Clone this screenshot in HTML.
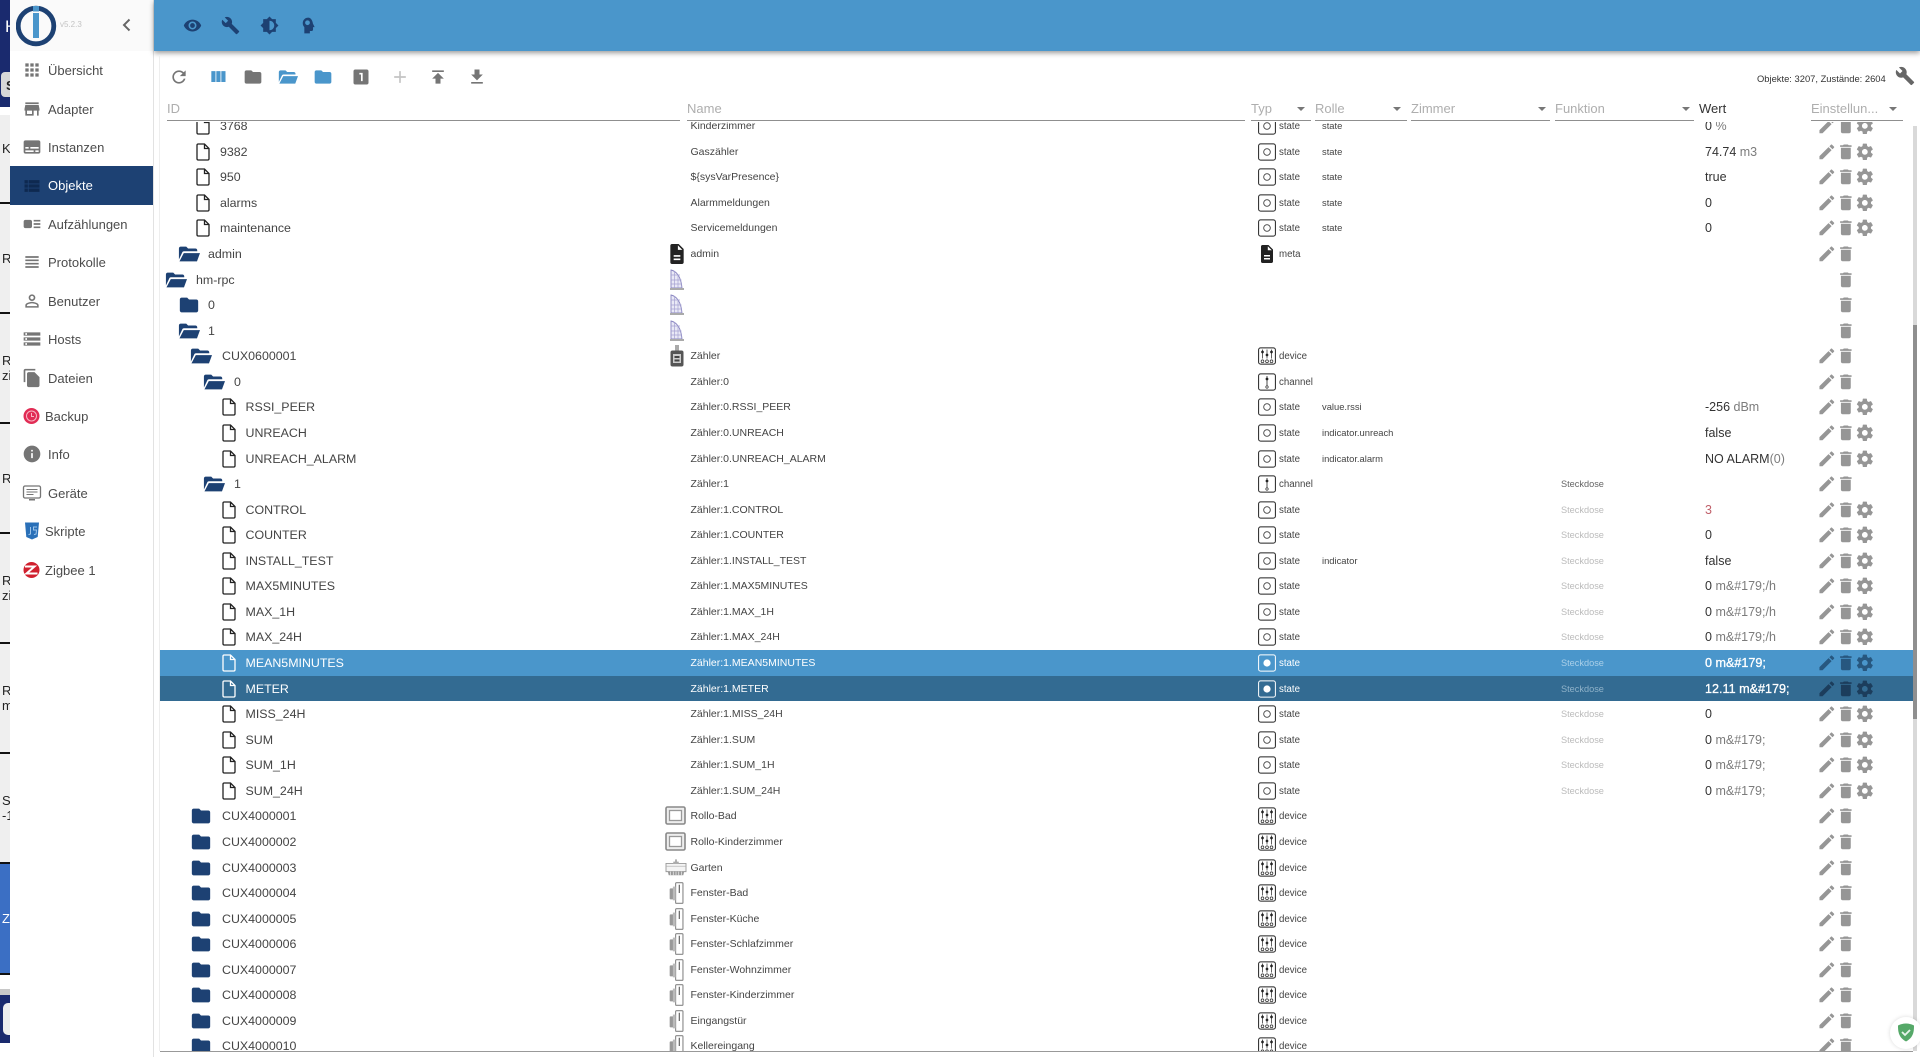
<!DOCTYPE html>
<html lang="de"><head><meta charset="utf-8"><title>ioBroker Objekte</title>
<style>
html,body{margin:0;padding:0;width:1920px;height:1057px;overflow:hidden;background:#fff;font-family:"Liberation Sans",sans-serif;color:#333}
#strip{position:absolute;left:0;top:0;width:10px;height:1057px;overflow:hidden;background:#efefef;font-size:13px;color:#222;line-height:15px}
#strip div,#strip span{position:absolute}
.ln{left:0;width:10px;height:2px;background:#111}
#side{position:absolute;left:10px;top:0;width:143px;height:1057px;background:#fff;border-right:1px solid #e2e2e2}
#side .hd{position:absolute;left:0;top:0;width:143px;height:51px;background:#fafafa}
.m{position:absolute;left:0;width:143px;height:38px;line-height:38px;font-size:13px;color:#4c4c4c}
.m span{position:absolute;left:38px;top:1px;white-space:nowrap}
.m svg{position:absolute;left:12px;top:9px;width:20px;height:20px;fill:#757575}
.m.x span{left:35px}
.m.on{background:#1d4173;color:#fff}.m.on svg{fill:#0e2950;top:10px}
#top{position:absolute;left:154px;top:0;width:1766px;height:51px;background:#4a96cb;box-shadow:0 2px 5px rgba(0,0,0,.4)}
#top svg{position:absolute;top:15.5px;width:19px;height:19px;fill:#1d4173}
#card{position:absolute;left:159px;top:56px;width:1px;height:995px;background:#eee}
.tb{position:absolute;top:67px;width:20px;height:20px;fill:#757575}
.hl{position:absolute;top:120px;height:1px;background:#8f8f8f}
.ht{position:absolute;top:101px;font-size:13px;line-height:16px;color:#aeaeae;white-space:nowrap}
.ar{position:absolute;top:107px;width:0;height:0;border-left:4px solid transparent;border-right:4px solid transparent;border-top:4px solid #777}
#list{position:absolute;left:160px;top:122px;width:1753px;height:929px;overflow:hidden}
#in{position:absolute;left:0;top:-8.8px;width:1753px}
.r{position:relative;height:25.57px;line-height:25.57px;width:1753px;color:#333}
.r>*{position:absolute;white-space:nowrap}
.r .k{top:1px;font-size:12.4px;color:#444}
.r .n{top:1px;left:530.5px;font-size:10.5px;color:#444}
.r .t{top:1px;left:1119px;font-size:9.7px;color:#444}
.r .o{left:1162px;font-size:9.4px;color:#444}
.r .u{top:1px;left:1401px;font-size:9.2px;color:#bbb}
.r .u.dk{color:#666}
.r .v{top:1px;left:1545px;font-size:12.5px;color:#333}
.r .v i{font-style:normal;color:#7c7c7c}
.r .v em{font-style:normal;color:#c0606a}
.r .a{left:1657px;top:3px;width:58px;height:20px;fill:#969696}
.r .ty{left:1098px;top:4px;width:18px;height:18px;stroke:#222;fill:none;color:#222}
.r .ic{left:507px;top:2px;width:20px;height:22px}
.r .ic.w{left:505px;top:3px;width:21px;height:19px}
.r .ic.g{left:504px;top:3px;width:24px;height:20px}
.fo{top:2px;width:22px;height:22px;fill:#1d4173;margin-left:-2px}
.fi{top:4px;width:14px;height:18px;fill:none;stroke:#222;stroke-width:1.3}
.L0 .d{left:7px}.L0 .k{left:36px}
.L1 .d{left:20px}.L1 .k{left:48px}
.L2 .d{left:32px}.L2 .k{left:62px}
.L3 .d{left:45px}.L3 .k{left:74px}
.L4 .d{left:36px}.L4 .k{left:60px}
.L5 .d{left:62px}.L5 .k{left:85.5px}
.s1{background:#4a96cb}.s2{background:#336b92}
.s1 .k,.s2 .k,.s1 .n,.s2 .n,.s1 .t,.s2 .t,.s1 .v,.s2 .v{color:#fff}
.s1 .v,.s2 .v{font-size:12.6px;-webkit-text-stroke:.3px #fff}
.s1 .u{color:#a9cfe8}.s2 .u{color:#8fb2c9}
.s1 .fi,.s2 .fi{stroke:#fff}
.s1 .ty,.s2 .ty{stroke:#fff;color:#fff}
.s1 .a{fill:#27577f}.s2 .a{fill:#1c3d5c}
</style></head><body>
<svg width="0" height="0" style="position:absolute">
<defs>
<symbol id="file" viewBox="0 0 14 18"><path d="M2.2 1h6.3l4.5 4.5V15.8a1.2 1.2 0 0 1-1.2 1.2H2.2A1.2 1.2 0 0 1 1 15.8V2.2A1.2 1.2 0 0 1 2.2 1zM8.5 1v4.5H13"/></symbol>
<symbol id="fc" viewBox="0 0 24 24"><path d="M10 4H4c-1.100 0-2 .9-2 2v12c0 1.100.9 2 2 2h16c1.100 0 2-.9 2-2V8c0-1.100-.9-2-2-2h-8l-2-2z"/></symbol>
<symbol id="fo" viewBox="0 0 24 24"><path d="M1 6c0-1.100.9-2 2-2h6l2 2h8c1.100 0 2 .9 2 2v1H6.500c-.9 0-1.700.6-1.900 1.400L1 18V6zM6.300 11H24l-3.300 9H1.600z"/></symbol>
<symbol id="st" viewBox="0 0 18 18"><rect x=".6" y=".9" width="16.800" height="16.200" rx="2" stroke-width="1"/><circle cx="9" cy="9" r="3.300" stroke-width=".9" stroke="#444"/></symbol>
<symbol id="sf" viewBox="0 0 18 18"><rect x=".6" y=".9" width="16.800" height="16.200" rx="2" stroke-width="1"/><circle cx="9" cy="9" r="3.600" fill="#fff" stroke="none"/></symbol>
<symbol id="ch" viewBox="0 0 18 18"><rect x=".6" y=".9" width="16.800" height="16.200" rx="2" stroke-width="1"/><path d="M9 3v10" stroke-width=".8"/><circle cx="9" cy="6" r="1.200" fill="currentColor" stroke-width=".5"/><circle cx="9" cy="14" r="1.200" stroke-width=".7"/></symbol>
<symbol id="dv" viewBox="0 0 18 18"><rect x=".6" y=".9" width="16.800" height="16.200" rx="2" stroke-width="1"/><path d="M4.500 2.500v9M9 2.500v9M13.500 2.500v9" stroke-width=".7"/><circle cx="4.500" cy="5" r="1.200" fill="currentColor" stroke-width=".4"/><circle cx="9" cy="8" r="1.200" fill="currentColor" stroke-width=".4"/><circle cx="13.500" cy="5" r="1.200" fill="currentColor" stroke-width=".4"/><circle cx="4.500" cy="14.300" r="1.400" stroke-width=".7"/><circle cx="9" cy="14.300" r="1.400" stroke-width=".7"/><circle cx="13.500" cy="14.300" r="1.400" stroke-width=".7"/></symbol>
<symbol id="mt" viewBox="0 0 18 18"><path fill="#222" stroke="none" d="M10.500 0H4.500C3.600 0 3 .7 3 1.500V16.500C3 17.300 3.600 18 4.500 18h9c.8 0 1.500-.7 1.500-1.500V4.500L10.500 0zM12 14.500H6V13h6v1.500zm0-3H6V10h6v1.500zM9.800 5.300V1.200l4 4.100h-4z"/></symbol>
<symbol id="a3" viewBox="0 0 58 20"><g transform="scale(.82)"><path d="M3 17.250V21h3.750L17.810 9.940l-3.750-3.750L3 17.250zM20.710 7.040c.39-.39.39-1.020 0-1.410l-2.340-2.340c-.39-.39-1.020-.39-1.410 0l-1.830 1.830 3.750 3.750 1.830-1.830z"/></g><g transform="translate(19 0) scale(.82)"><path d="M6 19c0 1.100.9 2 2 2h8c1.100 0 2-.9 2-2V7H6v12zM19 4h-3.500l-1-1h-5l-1 1H5v2h14V4z"/></g><g transform="translate(38 0) scale(.82)"><path d="M19.430 12.980c.04-.32.07-.64.07-.98s-.03-.66-.07-.98l2.110-1.650c.19-.15.24-.42.12-.64l-2-3.460c-.12-.22-.39-.3-.61-.22l-2.490 1c-.52-.4-1.080-.73-1.690-.98l-.38-2.650C14.460 2.180 14.250 2 14 2h-4c-.25 0-.46.18-.49.42l-.38 2.650c-.61.25-1.170.59-1.690.98l-2.490-1c-.23-.09-.49 0-.61.22l-2 3.460c-.13.22-.07.49.12.64l2.110 1.650c-.04.32-.07.65-.07.98s.03.66.07.98l-2.110 1.650c-.19.15-.24.42-.12.64l2 3.460c.12.22.39.3.61.22l2.490-1c.52.4 1.080.73 1.690.98l.38 2.650c.03.24.24.42.49.42h4c.25 0 .46-.18.49-.42l.38-2.650c.61-.25 1.170-.59 1.690-.98l2.490 1c.23.09.49 0 .61-.22l2-3.460c.12-.22.07-.49-.12-.64l-2.110-1.650zM12 15.500c-1.930 0-3.500-1.570-3.500-3.500s1.570-3.500 3.500-3.500 3.500 1.570 3.500 3.500-1.570 3.500-3.500 3.500z"/></g></symbol>
<symbol id="a2" viewBox="0 0 58 20"><g transform="scale(.82)"><path d="M3 17.250V21h3.750L17.810 9.940l-3.750-3.750L3 17.250zM20.710 7.040c.39-.39.39-1.020 0-1.410l-2.340-2.340c-.39-.39-1.020-.39-1.410 0l-1.830 1.830 3.750 3.750 1.830-1.830z"/></g><g transform="translate(19 0) scale(.82)"><path d="M6 19c0 1.100.9 2 2 2h8c1.100 0 2-.9 2-2V7H6v12zM19 4h-3.500l-1-1h-5l-1 1H5v2h14V4z"/></g></symbol>
<symbol id="a1" viewBox="0 0 58 20"><g transform="translate(19 0) scale(.82)"><path d="M6 19c0 1.100.9 2 2 2h8c1.100 0 2-.9 2-2V7H6v12zM19 4h-3.500l-1-1h-5l-1 1H5v2h14V4z"/></g></symbol>
<symbol id="bl" viewBox="0 0 20 22"><path d="M4 1c5 1 10 6 11 18H4z" fill="#e9e9f6" stroke="#8a86c0" stroke-width=".9"/><path d="M4 6h9M4 11h10.500M4 15h11M7.500 2v17M11 6v13" stroke="#a5a2d2" stroke-width=".7" fill="none"/><path d="M3 20h14" stroke="#aaa" stroke-width="2"/></symbol>
<symbol id="zl" viewBox="0 0 20 22"><rect x="8" y="0" width="4" height="6" fill="#aaa"/><rect x="3.500" y="5.500" width="13" height="16" rx="2" fill="#555"/><rect x="6" y="9" width="8" height="9" fill="#ccc"/><rect x="7.500" y="11" width="5" height="2" fill="#444"/><rect x="7.500" y="14.500" width="5" height="2" fill="#444"/></symbol>
<symbol id="ro" viewBox="0 0 21 19" preserveAspectRatio="none"><rect x="1" y="1" width="19" height="17" rx="1.500" fill="#eee" stroke="#888" stroke-width="1.600"/><rect x="4.500" y="4.500" width="12" height="10" fill="#fff" stroke="#999" stroke-width="1.300"/></symbol>
<symbol id="ga" viewBox="0 0 24 22"><path d="M1 6h22v9H1z" fill="#f4f4f4" stroke="#999" stroke-width="1"/><path d="M9 4h6v2H9zM11 1.500h2V4h-2z" fill="#aaa"/><path d="M1 9h22" stroke="#aaa" stroke-width=".8"/><path d="M3 15h18l-1 4H4z" fill="#999"/><path d="M6 15v4M9 15v4M12 15v4M15 15v4M18 15v4" stroke="#eee" stroke-width=".8"/></symbol>
<symbol id="fe" viewBox="0 0 20 24"><rect x="2" y="7" width="6" height="12" rx="1" fill="#999"/><rect x="8.500" y=".7" width="8" height="22.600" rx="1" fill="#fff" stroke="#888" stroke-width="1.200"/><path d="M12.500 3v9" stroke="#555" stroke-width="1.200"/><rect x="5.500" y="5" width="3" height="15" fill="#bbb"/></symbol>
</defs></svg>

<div id="strip">
<div style="left:0;top:0;width:10px;height:107px;background:#1a2a6e"></div>
<span style="left:5px;top:17px;color:#fff;font-size:17px;line-height:20px">H</span>
<div style="left:1px;top:72px;width:12px;height:25px;background:#d8d8d8;border-radius:4px 0 0 4px"></div>
<span style="left:6px;top:78px;font-weight:bold">S</span>
<div style="left:0;top:107px;width:10px;height:8px;background:#fff"></div>
<span style="left:2px;top:141px">K</span>
<div class="ln" style="top:202px"></div>
<span style="left:2px;top:251px">R</span>
<div class="ln" style="top:312px"></div>
<span style="left:2px;top:353px">R</span><span style="left:2px;top:368px">zi</span>
<div class="ln" style="top:422px"></div>
<span style="left:2px;top:471px">R</span>
<div class="ln" style="top:532px"></div>
<span style="left:2px;top:573px">R</span><span style="left:2px;top:588px">zi</span>
<div class="ln" style="top:642px"></div>
<span style="left:2px;top:683px">R</span><span style="left:2px;top:698px">m</span>
<div class="ln" style="top:752px"></div>
<span style="left:2px;top:793px">S</span><span style="left:2px;top:808px">-1</span>
<div class="ln" style="top:862px"></div>
<div style="left:0;top:864px;width:10px;height:109px;background:#3b6fc4"></div>
<span style="left:2px;top:911px;color:#fff">Z</span>
<div class="ln" style="top:973px"></div>
<div style="left:0;top:975px;width:10px;height:14px;background:#fff"></div>
<div style="left:0;top:989px;width:10px;height:6px;background:#c8c8c8"></div>
<div style="left:0;top:995px;width:10px;height:48px;background:#1a2a6e"></div>
<div style="left:3px;top:1003px;width:12px;height:32px;background:#eee;border-radius:5px"></div>
<div style="left:0;top:1043px;width:10px;height:14px;background:#fff"></div>
</div>

<div id="side">
<div class="hd"></div>
<svg style="position:absolute;left:6px;top:5px;width:42px;height:42px" viewBox="0 0 42 42"><circle cx="20" cy="21" r="17.800" fill="none" stroke="#1d4173" stroke-width="4.800"/><rect x="17" y="1" width="6" height="5.500" fill="#4a96cb"/><rect x="17" y="8" width="6" height="25" fill="#4a96cb"/></svg>
<span style="position:absolute;left:50px;top:20px;font-size:8px;color:#c4c4c4;line-height:10px">v5.2.3</span>
<svg style="position:absolute;left:109px;top:17px;width:16px;height:16px" viewBox="0 0 16 16"><path d="M10.500 2.500 5 8l5.500 5.500" fill="none" stroke="#666" stroke-width="2"/></svg>
<div class="m" style="top:51px"><svg viewBox="0 0 24 24"><path d="M4 8h4V4H4v4zm6 12h4v-4h-4v4zm-6 0h4v-4H4v4zm0-6h4v-4H4v4zm6 0h4v-4h-4v4zm6-10v4h4V4h-4zm-6 4h4V4h-4v4zm6 6h4v-4h-4v4zm0 6h4v-4h-4v4z"/></svg><span>Übersicht</span></div>
<div class="m" style="top:90px"><svg viewBox="0 0 24 24"><path d="M20 4H4v2h16V4zm1 10v-2l-1-5H4l-1 5v2h1v6h10v-6h4v6h2v-6h1zm-9 4H6v-4h6v4z"/></svg><span>Adapter</span></div>
<div class="m" style="top:128px"><svg viewBox="0 0 24 24"><path d="M20 4H4c-1.100 0-2 .9-2 2v12c0 1.100.9 2 2 2h16c1.100 0 2-.9 2-2V6c0-1.100-.9-2-2-2zM4 12h4v2H4v-2zm10 6H4v-2h10v2zm6 0h-4v-2h4v2zm0-4H10v-2h10v2z"/></svg><span>Instanzen</span></div>
<div class="m on" style="top:166px;height:39px"><svg viewBox="0 0 24 24"><path d="M3 14h4v-4H3v4zm0 5h4v-4H3v4zM3 9h4V5H3v4zm5 5h13v-4H8v4zm0 5h13v-4H8v4zM8 5v4h13V5H8z"/></svg><span>Objekte</span></div>
<div class="m" style="top:205px"><svg viewBox="0 0 24 24"><path d="M22 13h-8v-2h8v2zm0-6h-8v2h8V7zm-8 10h8v-2h-8v2zm-2-8v6c0 1.100-.9 2-2 2H4c-1.100 0-2-.9-2-2V9c0-1.100.9-2 2-2h6c1.100 0 2 .9 2 2z"/></svg><span>Aufzählungen</span></div>
<div class="m" style="top:243px"><svg viewBox="0 0 24 24"><path d="M4 15h16v-2H4v2zm0 4h16v-2H4v2zm0-8h16V9H4v2zm0-6v2h16V5H4z"/></svg><span>Protokolle</span></div>
<div class="m" style="top:282px"><svg viewBox="0 0 24 24"><path d="M12 5.900c1.160 0 2.100.94 2.100 2.100s-.94 2.100-2.100 2.100S9.900 9.160 9.900 8s.94-2.100 2.100-2.100m0 9c2.970 0 6.100 1.460 6.100 2.100v1.100H5.900V17c0-.64 3.130-2.100 6.100-2.100M12 4C9.790 4 8 5.790 8 8s1.790 4 4 4 4-1.790 4-4-1.790-4-4-4zm0 9c-2.670 0-8 1.340-8 4v3h16v-3c0-2.660-5.330-4-8-4z"/></svg><span>Benutzer</span></div>
<div class="m" style="top:320px"><svg viewBox="0 0 24 24"><path d="M2 20h20v-4H2v4zm2-3h2v2H4v-2zM2 4v4h20V4H2zm4 3H4V5h2v2zm-4 7h20v-4H2v4zm2-3h2v2H4v-2z"/></svg><span>Hosts</span></div>
<div class="m" style="top:359px"><svg viewBox="0 0 24 24"><path d="M16 1H4c-1.100 0-2 .9-2 2v14h2V3h12V1zm-1 4l6 6v10c0 1.100-.9 2-2 2H7.990C6.890 23 6 22.100 6 21l.01-14c0-1.100.89-2 1.990-2h7z"/></svg><span>Dateien</span></div>
<div class="m x" style="top:397px"><svg viewBox="0 0 20 20" style="left:12px"><circle cx="9.500" cy="10" r="8" fill="#e12c55"/><circle cx="9.500" cy="10" r="5" fill="none" stroke="#f7b7c5" stroke-width="1"/><path d="M9.500 7v3.500H12" fill="none" stroke="#f7b7c5" stroke-width="1"/></svg><span>Backup</span></div>
<div class="m" style="top:435px"><svg viewBox="0 0 24 24"><path d="M12 2C6.480 2 2 6.480 2 12s4.480 10 10 10 10-4.480 10-10S17.520 2 12 2zm1 15h-2v-6h2v6zm0-8h-2V7h2v2z"/></svg><span>Info</span></div>
<div class="m" style="top:474px"><svg viewBox="0 0 20 20"><rect x="1.500" y="3" width="17" height="12" rx="1.500" fill="none" stroke="#757575" stroke-width="1.300"/><path d="M4.500 6.500h11M4.500 9h11M4.500 11.500h7" stroke="#757575" stroke-width="1"/><path d="M7 16h6v1.500H7z"/></svg><span>Geräte</span></div>
<div class="m x" style="top:512px"><svg viewBox="0 0 20 20"><path d="M3 1.500h14L15.700 16 10 18.500 4.300 16z" fill="#2a70b8"/><path d="M8.500 6v7l-2 .6M15 6h-3.500v3h3l-.4 4-2.100.6" fill="none" stroke="#9cc4ea" stroke-width="1"/></svg><span>Skripte</span></div>
<div class="m x" style="top:551px"><svg viewBox="0 0 20 20"><circle cx="9.500" cy="10" r="8" fill="#d0202e"/><path d="M3 6.500h9.500L4.500 13.500h11" fill="none" stroke="#fff" stroke-width="2"/></svg><span>Zigbee 1</span></div>
</div>

<div id="top">
<svg style="left:28.500px" viewBox="0 0 24 24"><path d="M12 4.500C7 4.500 2.730 7.610 1 12c1.730 4.390 6 7.500 11 7.500s9.270-3.110 11-7.500c-1.730-4.390-6-7.500-11-7.500zM12 17c-2.760 0-5-2.240-5-5s2.240-5 5-5 5 2.240 5 5-2.240 5-5 5zm0-8c-1.660 0-3 1.340-3 3s1.340 3 3 3 3-1.340 3-3-1.340-3-3-3z"/></svg>
<svg style="left:66.500px" viewBox="0 0 24 24"><path d="M22.700 19l-9.100-9.100c.9-2.300.4-5-1.500-6.900-2-2-5-2.400-7.400-1.300L9 6 6 9 1.600 4.700C.4 7.100.9 10.100 2.900 12.100c1.900 1.900 4.600 2.400 6.900 1.500l9.100 9.100c.4.4 1 .4 1.400 0l2.300-2.300c.5-.4.5-1.100.1-1.400z"/></svg>
<svg style="left:105.500px" viewBox="0 0 24 24"><path d="M20 8.690V4h-4.690L12 .69 8.690 4H4v4.690L.69 12 4 15.310V20h4.690L12 23.310 15.310 20H20v-4.690L23.310 12 20 8.690zM12 18V6c3.310 0 6 2.690 6 6s-2.690 6-6 6z"/></svg>
<svg style="left:143.500px" viewBox="0 0 24 24"><path fill-rule="evenodd" d="M13 2C9 2 6 5 6 9c0 2.200.7 3.600 2 5v8h7v-3h2c1.100 0 2-.9 2-2v-3h2l-2.200-4.600C18.300 5.300 16 2 13 2zm-1 3.500a3 3 0 0 1 3 3 3 3 0 0 1-3 3 3 3 0 0 1-3-3 3 3 0 0 1 3-3z"/></svg>
</div>
<div id="card"></div>

<svg class="tb" style="left:169px" viewBox="0 0 24 24"><path d="M17.650 6.350C16.200 4.900 14.210 4 12 4c-4.420 0-7.990 3.580-7.990 8s3.570 8 7.990 8c3.730 0 6.840-2.550 7.730-6h-2.080c-.82 2.330-3.040 4-5.650 4-3.310 0-6-2.690-6-6s2.690-6 6-6c1.660 0 3.140.69 4.220 1.780L13 11h7V4l-2.350 2.350z"/></svg>
<svg class="tb" style="left:208px;fill:#4a96cb" viewBox="0 0 24 24"><path d="M10 18h5V5h-5v13zm-6 0h5V5H4v13zM16 5v13h5V5h-5z"/></svg>
<svg class="tb" style="left:243px" viewBox="0 0 24 24"><path d="M10 4H4c-1.100 0-2 .9-2 2v12c0 1.100.9 2 2 2h16c1.100 0 2-.9 2-2V8c0-1.100-.9-2-2-2h-8l-2-2z"/></svg>
<svg class="tb" style="left:278px;fill:#4a96cb" viewBox="0 0 24 24"><path d="M1 6c0-1.100.9-2 2-2h6l2 2h8c1.100 0 2 .9 2 2v1H6.500c-.9 0-1.700.6-1.900 1.400L1 18V6zM6.300 11H24l-3.300 9H1.600z"/></svg>
<svg class="tb" style="left:313px;fill:#4a96cb" viewBox="0 0 24 24"><path d="M10 4H4c-1.100 0-2 .9-2 2v12c0 1.100.9 2 2 2h16c1.100 0 2-.9 2-2V8c0-1.100-.9-2-2-2h-8l-2-2z"/></svg>
<svg class="tb" style="left:351px" viewBox="0 0 24 24"><path d="M19 3H5c-1.100 0-2 .9-2 2v14c0 1.100.9 2 2 2h14c1.100 0 2-.9 2-2V5c0-1.100-.9-2-2-2zm-5 14h-2V9h-2V7h4v10z"/></svg>
<svg class="tb" style="left:390px;fill:#c4c4c4" viewBox="0 0 24 24"><path d="M19 13h-6v6h-2v-6H5v-2h6V5h2v6h6v2z"/></svg>
<svg class="tb" style="left:428px" viewBox="0 0 24 24"><path d="M5 4v2h14V4H5zm0 10h4v6h6v-6h4l-7-7-7 7z"/></svg>
<svg class="tb" style="left:467px" viewBox="0 0 24 24"><path d="M19 9h-4V3H9v6H5l7 7 7-7zM5 18v2h14v-2H5z"/></svg>

<span style="position:absolute;left:1757px;top:73px;font-size:9.400px;line-height:12px;color:#333;white-space:nowrap">Objekte: 3207, Zustände: 2604</span>
<svg style="position:absolute;left:1895px;top:66px;width:20px;height:20px;fill:#666" viewBox="0 0 24 24"><path d="M22.700 19l-9.100-9.100c.9-2.300.4-5-1.500-6.900-2-2-5-2.400-7.400-1.300L9 6 6 9 1.600 4.700C.4 7.100.9 10.100 2.900 12.100c1.900 1.900 4.600 2.400 6.900 1.500l9.100 9.100c.4.4 1 .4 1.400 0l2.300-2.300c.5-.4.5-1.100.1-1.400z"/></svg>

<span class="ht" style="left:167px">ID</span><div class="hl" style="left:167px;width:513px"></div>
<span class="ht" style="left:687px">Name</span><div class="hl" style="left:687px;width:558px"></div>
<span class="ht" style="left:1251px">Typ</span><div class="ar" style="left:1297px"></div><div class="hl" style="left:1251px;width:60px"></div>
<span class="ht" style="left:1315px">Rolle</span><div class="ar" style="left:1393px"></div><div class="hl" style="left:1315px;width:92px"></div>
<span class="ht" style="left:1411px">Zimmer</span><div class="ar" style="left:1538px"></div><div class="hl" style="left:1411px;width:139px"></div>
<span class="ht" style="left:1555px">Funktion</span><div class="ar" style="left:1682px"></div><div class="hl" style="left:1555px;width:139px"></div>
<span class="ht" style="left:1699px;color:#333">Wert</span>
<span class="ht" style="left:1811px">Einstellun...</span><div class="ar" style="left:1889px"></div><div class="hl" style="left:1811px;width:92px"></div>

<div id="list"><div id="in">
<div class="r L4"><svg class="d fi"><use href="#file"/></svg><span class="k">3768</span><span class="n">Kinderzimmer</span><svg class="ty"><use href="#st"/></svg><span class="t">state</span><span class="o">state</span><span class="v">0 <i>%</i></span><svg class="a"><use href="#a3"/></svg></div>
<div class="r L4"><svg class="d fi"><use href="#file"/></svg><span class="k">9382</span><span class="n">Gaszähler</span><svg class="ty"><use href="#st"/></svg><span class="t">state</span><span class="o">state</span><span class="v">74.74 <i>m3</i></span><svg class="a"><use href="#a3"/></svg></div>
<div class="r L4"><svg class="d fi"><use href="#file"/></svg><span class="k">950</span><span class="n">${sysVarPresence}</span><svg class="ty"><use href="#st"/></svg><span class="t">state</span><span class="o">state</span><span class="v">true</span><svg class="a"><use href="#a3"/></svg></div>
<div class="r L4"><svg class="d fi"><use href="#file"/></svg><span class="k">alarms</span><span class="n">Alarmmeldungen</span><svg class="ty"><use href="#st"/></svg><span class="t">state</span><span class="o">state</span><span class="v">0</span><svg class="a"><use href="#a3"/></svg></div>
<div class="r L4"><svg class="d fi"><use href="#file"/></svg><span class="k">maintenance</span><span class="n">Servicemeldungen</span><svg class="ty"><use href="#st"/></svg><span class="t">state</span><span class="o">state</span><span class="v">0</span><svg class="a"><use href="#a3"/></svg></div>
<div class="r L1"><svg class="d fo"><use href="#fo"/></svg><span class="k">admin</span><svg class="ic"><use href="#mt"/></svg><span class="n">admin</span><svg class="ty"><use href="#mt"/></svg><span class="t">meta</span><svg class="a"><use href="#a2"/></svg></div>
<div class="r L0"><svg class="d fo"><use href="#fo"/></svg><span class="k">hm-rpc</span><svg class="ic"><use href="#bl"/></svg><svg class="a"><use href="#a1"/></svg></div>
<div class="r L1"><svg class="d fo"><use href="#fc"/></svg><span class="k">0</span><svg class="ic"><use href="#bl"/></svg><svg class="a"><use href="#a1"/></svg></div>
<div class="r L1"><svg class="d fo"><use href="#fo"/></svg><span class="k">1</span><svg class="ic"><use href="#bl"/></svg><svg class="a"><use href="#a1"/></svg></div>
<div class="r L2"><svg class="d fo"><use href="#fo"/></svg><span class="k">CUX0600001</span><svg class="ic"><use href="#zl"/></svg><span class="n">Zähler</span><svg class="ty"><use href="#dv"/></svg><span class="t">device</span><svg class="a"><use href="#a2"/></svg></div>
<div class="r L3"><svg class="d fo"><use href="#fo"/></svg><span class="k">0</span><span class="n">Zähler:0</span><svg class="ty"><use href="#ch"/></svg><span class="t">channel</span><svg class="a"><use href="#a2"/></svg></div>
<div class="r L5"><svg class="d fi"><use href="#file"/></svg><span class="k">RSSI_PEER</span><span class="n">Zähler:0.RSSI_PEER</span><svg class="ty"><use href="#st"/></svg><span class="t">state</span><span class="o">value.rssi</span><span class="v">-256 <i>dBm</i></span><svg class="a"><use href="#a3"/></svg></div>
<div class="r L5"><svg class="d fi"><use href="#file"/></svg><span class="k">UNREACH</span><span class="n">Zähler:0.UNREACH</span><svg class="ty"><use href="#st"/></svg><span class="t">state</span><span class="o">indicator.unreach</span><span class="v">false</span><svg class="a"><use href="#a3"/></svg></div>
<div class="r L5"><svg class="d fi"><use href="#file"/></svg><span class="k">UNREACH_ALARM</span><span class="n">Zähler:0.UNREACH_ALARM</span><svg class="ty"><use href="#st"/></svg><span class="t">state</span><span class="o">indicator.alarm</span><span class="v">NO ALARM<i>(0)</i></span><svg class="a"><use href="#a3"/></svg></div>
<div class="r L3"><svg class="d fo"><use href="#fo"/></svg><span class="k">1</span><span class="n">Zähler:1</span><svg class="ty"><use href="#ch"/></svg><span class="t">channel</span><span class="u dk">Steckdose</span><svg class="a"><use href="#a2"/></svg></div>
<div class="r L5"><svg class="d fi"><use href="#file"/></svg><span class="k">CONTROL</span><span class="n">Zähler:1.CONTROL</span><svg class="ty"><use href="#st"/></svg><span class="t">state</span><span class="u">Steckdose</span><span class="v"><em>3</em></span><svg class="a"><use href="#a3"/></svg></div>
<div class="r L5"><svg class="d fi"><use href="#file"/></svg><span class="k">COUNTER</span><span class="n">Zähler:1.COUNTER</span><svg class="ty"><use href="#st"/></svg><span class="t">state</span><span class="u">Steckdose</span><span class="v">0</span><svg class="a"><use href="#a3"/></svg></div>
<div class="r L5"><svg class="d fi"><use href="#file"/></svg><span class="k">INSTALL_TEST</span><span class="n">Zähler:1.INSTALL_TEST</span><svg class="ty"><use href="#st"/></svg><span class="t">state</span><span class="o">indicator</span><span class="u">Steckdose</span><span class="v">false</span><svg class="a"><use href="#a3"/></svg></div>
<div class="r L5"><svg class="d fi"><use href="#file"/></svg><span class="k">MAX5MINUTES</span><span class="n">Zähler:1.MAX5MINUTES</span><svg class="ty"><use href="#st"/></svg><span class="t">state</span><span class="u">Steckdose</span><span class="v">0 <i>m&amp;#179;/h</i></span><svg class="a"><use href="#a3"/></svg></div>
<div class="r L5"><svg class="d fi"><use href="#file"/></svg><span class="k">MAX_1H</span><span class="n">Zähler:1.MAX_1H</span><svg class="ty"><use href="#st"/></svg><span class="t">state</span><span class="u">Steckdose</span><span class="v">0 <i>m&amp;#179;/h</i></span><svg class="a"><use href="#a3"/></svg></div>
<div class="r L5"><svg class="d fi"><use href="#file"/></svg><span class="k">MAX_24H</span><span class="n">Zähler:1.MAX_24H</span><svg class="ty"><use href="#st"/></svg><span class="t">state</span><span class="u">Steckdose</span><span class="v">0 <i>m&amp;#179;/h</i></span><svg class="a"><use href="#a3"/></svg></div>
<div class="r L5 s1"><svg class="d fi"><use href="#file"/></svg><span class="k">MEAN5MINUTES</span><span class="n">Zähler:1.MEAN5MINUTES</span><svg class="ty"><use href="#sf"/></svg><span class="t">state</span><span class="u">Steckdose</span><span class="v">0 m&amp;#179;</span><svg class="a"><use href="#a3"/></svg></div>
<div class="r L5 s2"><svg class="d fi"><use href="#file"/></svg><span class="k">METER</span><span class="n">Zähler:1.METER</span><svg class="ty"><use href="#sf"/></svg><span class="t">state</span><span class="u">Steckdose</span><span class="v">12.11 m&amp;#179;</span><svg class="a"><use href="#a3"/></svg></div>
<div class="r L5"><svg class="d fi"><use href="#file"/></svg><span class="k">MISS_24H</span><span class="n">Zähler:1.MISS_24H</span><svg class="ty"><use href="#st"/></svg><span class="t">state</span><span class="u">Steckdose</span><span class="v">0</span><svg class="a"><use href="#a3"/></svg></div>
<div class="r L5"><svg class="d fi"><use href="#file"/></svg><span class="k">SUM</span><span class="n">Zähler:1.SUM</span><svg class="ty"><use href="#st"/></svg><span class="t">state</span><span class="u">Steckdose</span><span class="v">0 <i>m&amp;#179;</i></span><svg class="a"><use href="#a3"/></svg></div>
<div class="r L5"><svg class="d fi"><use href="#file"/></svg><span class="k">SUM_1H</span><span class="n">Zähler:1.SUM_1H</span><svg class="ty"><use href="#st"/></svg><span class="t">state</span><span class="u">Steckdose</span><span class="v">0 <i>m&amp;#179;</i></span><svg class="a"><use href="#a3"/></svg></div>
<div class="r L5"><svg class="d fi"><use href="#file"/></svg><span class="k">SUM_24H</span><span class="n">Zähler:1.SUM_24H</span><svg class="ty"><use href="#st"/></svg><span class="t">state</span><span class="u">Steckdose</span><span class="v">0 <i>m&amp;#179;</i></span><svg class="a"><use href="#a3"/></svg></div>
<div class="r L2"><svg class="d fo"><use href="#fc"/></svg><span class="k">CUX4000001</span><svg class="ic w"><use href="#ro"/></svg><span class="n">Rollo-Bad</span><svg class="ty"><use href="#dv"/></svg><span class="t">device</span><svg class="a"><use href="#a2"/></svg></div>
<div class="r L2"><svg class="d fo"><use href="#fc"/></svg><span class="k">CUX4000002</span><svg class="ic w"><use href="#ro"/></svg><span class="n">Rollo-Kinderzimmer</span><svg class="ty"><use href="#dv"/></svg><span class="t">device</span><svg class="a"><use href="#a2"/></svg></div>
<div class="r L2"><svg class="d fo"><use href="#fc"/></svg><span class="k">CUX4000003</span><svg class="ic g"><use href="#ga"/></svg><span class="n">Garten</span><svg class="ty"><use href="#dv"/></svg><span class="t">device</span><svg class="a"><use href="#a2"/></svg></div>
<div class="r L2"><svg class="d fo"><use href="#fc"/></svg><span class="k">CUX4000004</span><svg class="ic"><use href="#fe"/></svg><span class="n">Fenster-Bad</span><svg class="ty"><use href="#dv"/></svg><span class="t">device</span><svg class="a"><use href="#a2"/></svg></div>
<div class="r L2"><svg class="d fo"><use href="#fc"/></svg><span class="k">CUX4000005</span><svg class="ic"><use href="#fe"/></svg><span class="n">Fenster-Küche</span><svg class="ty"><use href="#dv"/></svg><span class="t">device</span><svg class="a"><use href="#a2"/></svg></div>
<div class="r L2"><svg class="d fo"><use href="#fc"/></svg><span class="k">CUX4000006</span><svg class="ic"><use href="#fe"/></svg><span class="n">Fenster-Schlafzimmer</span><svg class="ty"><use href="#dv"/></svg><span class="t">device</span><svg class="a"><use href="#a2"/></svg></div>
<div class="r L2"><svg class="d fo"><use href="#fc"/></svg><span class="k">CUX4000007</span><svg class="ic"><use href="#fe"/></svg><span class="n">Fenster-Wohnzimmer</span><svg class="ty"><use href="#dv"/></svg><span class="t">device</span><svg class="a"><use href="#a2"/></svg></div>
<div class="r L2"><svg class="d fo"><use href="#fc"/></svg><span class="k">CUX4000008</span><svg class="ic"><use href="#fe"/></svg><span class="n">Fenster-Kinderzimmer</span><svg class="ty"><use href="#dv"/></svg><span class="t">device</span><svg class="a"><use href="#a2"/></svg></div>
<div class="r L2"><svg class="d fo"><use href="#fc"/></svg><span class="k">CUX4000009</span><svg class="ic"><use href="#fe"/></svg><span class="n">Eingangstür</span><svg class="ty"><use href="#dv"/></svg><span class="t">device</span><svg class="a"><use href="#a2"/></svg></div>
<div class="r L2"><svg class="d fo"><use href="#fc"/></svg><span class="k">CUX4000010</span><svg class="ic"><use href="#fe"/></svg><span class="n">Kellereingang</span><svg class="ty"><use href="#dv"/></svg><span class="t">device</span><svg class="a"><use href="#a2"/></svg></div>
</div></div>

<div style="position:absolute;left:1913px;top:126px;width:4px;height:925px;background:#d9d9d9"></div>
<div style="position:absolute;left:1913px;top:325px;width:4px;height:394px;background:#8f8f8f"></div>
<div style="position:absolute;left:160px;top:1051px;width:1753px;height:1px;background:#999"></div>
<div style="position:absolute;left:1890px;top:1017px;width:32px;height:32px;border-radius:50%;background:#fff;box-shadow:0 0 4px rgba(0,0,0,.15)"></div>
<svg style="position:absolute;left:1897px;top:1023px;width:18px;height:19px" viewBox="0 0 18 19"><path d="M9 .5c3 0 6 1 8 2 0 6-.5 12-8 16-7.500-4-8-10-8-16 2-1 5-2 8-2z" fill="#55a868"/><path d="M5 9l3 3 5-5" fill="none" stroke="#e8f5ec" stroke-width="1.800"/></svg>
</body></html>
